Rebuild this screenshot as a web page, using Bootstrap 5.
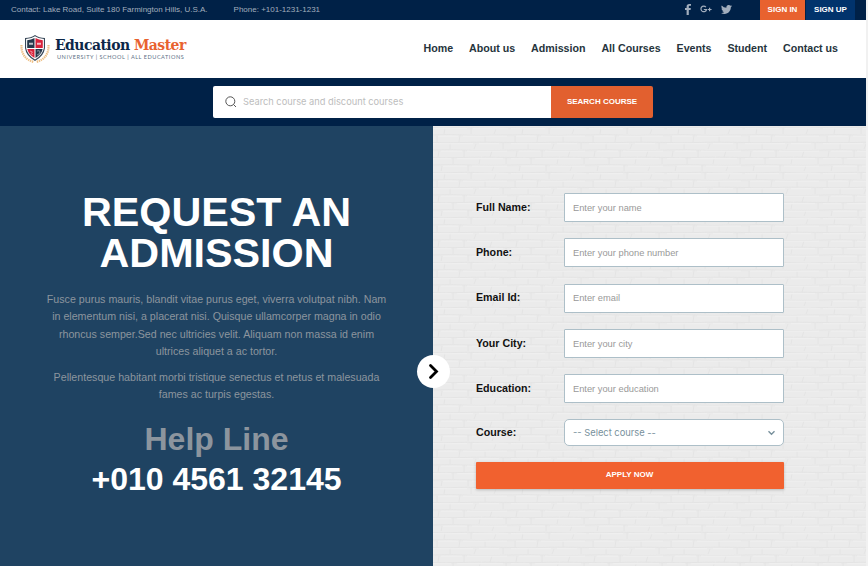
<!DOCTYPE html>
<html lang="en">
<head>
<meta charset="utf-8">
<meta name="viewport" content="width=device-width, initial-scale=1">
<title>Education Master</title>
<link href="https://cdn.jsdelivr.net/npm/bootstrap@5.3.0/dist/css/bootstrap.min.css" rel="stylesheet">
<style>
body{font-family:"Liberation Sans",Arial,sans-serif;background:#f1f1f1;overflow:hidden;height:566px;line-height:1.5}
svg{display:block;flex:none}
.site{width:866px;height:566px}
.topbar{height:20px;background:#002147;color:#a2aebd;font-size:8px;line-height:19px;padding-left:11px;padding-right:11px}
.topbar .tel{margin-left:26px}
.social{gap:9px;margin-right:28px;height:19px}
.sign{font-size:8px;font-weight:700;color:#fff;height:20px;line-height:19px;border-radius:0;padding:0;text-align:center;border:0}
.sign-in{background:#e8622f;width:45px}
.sign-up{background:#01336c;width:49px;margin-left:1px}
.mainnav{height:58px;padding:0 28px 0 20px}
.brandtext{padding-top:3px;margin-left:5px}
.brandname{font-family:"DejaVu Serif Condensed","DejaVu Serif",serif;font-weight:700;font-size:15.5px;line-height:16px;letter-spacing:-.52px;color:#0d2748;white-space:nowrap}
.brandname span{color:#e8622f}
.tagline{font-family:Lato,sans-serif;font-size:5.6px;line-height:7px;letter-spacing:.51px;color:#5d6f86;white-space:nowrap;padding-left:2px}
.menu{gap:15.9px;padding-bottom:2px}
.mainnav .nav-link{font-size:10.67px;font-weight:700;color:#26343c;padding:0;line-height:16px}
.searchbar{height:48px;background:#002147}
.searchbox{width:338px;height:32px;background:#fff;border-radius:2px 0 0 2px;padding-left:12px}
.searchbox input{font-family:Inter,sans-serif;font-size:9.28px;padding:0;margin-left:6px;border:0;background:none;box-shadow:none;line-height:14px}
.searchbox input::placeholder{color:#bdbdbd}
.btn-search{width:102px;height:32px;background:#e2602f;color:#fff;font-size:8px;font-weight:700;border-radius:0 2px 2px 0;border:0;padding:0 0 1px}
.half{width:433px;height:440px}
.request{background:#1f4362;color:#8c959e;padding:66px 40px 0;text-align:center}
.request h2{font-size:41.3px;line-height:41px;font-weight:700;color:#fff;margin:0 0 17px}
.request p{font-size:10.67px;line-height:17.35px;margin:0 0 8.5px}
.request .help{font-size:32px;line-height:40px;font-weight:700;margin-top:15px}
.request .help b{color:#fff;display:block}
.arrow{left:417px;top:229px;width:33px;height:33px;border-radius:50%;background:#fff}
.apply{padding:67px 82px 0 43px}
.bricks{position:absolute;left:0;top:0}
.frow{height:29.3px;margin-bottom:16px}
.frow label{width:88px;font-size:10.67px;font-weight:700;color:#111;line-height:16px;padding-bottom:2px}
.frow .form-control{height:29px;font-size:9.3px;border:1px solid #adbfc8;border-radius:1px;padding:0 8px;width:220px;background:#fff}
.frow .form-control::placeholder{color:#999}
.picker-row{height:27px}
.frow .picker{height:27px;width:220px;font-family:Inter,sans-serif;font-size:9.33px;color:#78909c;border:1px solid #adbfc8;border-radius:5px;background:#fff;padding:0 7px 0 8px}
.btn-apply{width:308px;height:27px;background:#f1612f;color:#fff;font-size:8px;font-weight:700;border:0;border-radius:1px;padding:0 1px 2px 0;box-shadow:0 1px 3px rgba(0,0,0,.22)}
</style>
</head>
<body>
<div class="site">
<header>
<div class="topbar d-flex">
  <span>Contact: Lake Road, Suite 180 Farmington Hills, U.S.A.</span><span class="tel">Phone: +101-1231-1231</span>
  <div class="social d-flex align-items-center ms-auto">
    <svg width="6" height="11" viewBox="0 0 6 11" fill="#a2aebd"><path d="M1.600 11V6H0V4.100h1.600V2.700C1.600 1 2.600 0 4.200 0L6 .1v1.700H4.900C4 1.800 3.800 2.200 3.800 2.800v1.300h2L5.600 6H3.800v5z"/></svg>
    <svg width="12" height="9" viewBox="0 0 12 9" fill="none" stroke="#a2aebd" stroke-width="1.200"><path d="M5.900 2.100A2.800 2.800 0 1 0 6.500 4.500H3.800M9.600 2.700v3.600M7.800 4.500h3.800"/></svg>
    <svg width="11" height="9" viewBox="0 0 16 13" fill="#a2aebd"><path d="M5 13c6 0 9.300-5 9.300-9.300v-.4A6.700 6.700 0 0 0 16 1.500a6.600 6.600 0 0 1-1.900.5A3.300 3.300 0 0 0 15.500.2a6.600 6.600 0 0 1-2 .8 3.300 3.300 0 0 0-5.600 3A9.300 9.300 0 0 1 1.100.6a3.300 3.300 0 0 0 1 4.400 3.200 3.200 0 0 1-1.500-.4 3.300 3.300 0 0 0 2.600 3.200 3.200 3.200 0 0 1-1.500.1 3.300 3.300 0 0 0 3.100 2.300A6.600 6.600 0 0 1 0 11.500 9.300 9.300 0 0 0 5 13"/></svg>
  </div>
  <a class="btn sign sign-in" href="#">SIGN IN</a><a class="btn sign sign-up" href="#">SIGN UP</a>
</div>
<nav class="mainnav bg-white d-flex align-items-center justify-content-between">
  <a class="d-flex text-decoration-none" href="#">
    <svg width="30" height="30" viewBox="0 0 30 30">
      <g fill="none" stroke="#eebf85" stroke-width="2.200" stroke-dasharray="1.400 .7"><path d="M1.500 11C1 19 5 26 14 28M28.500 11C29 19 25 26 16 28"/></g>
      <path d="M5 4Q11 4 15 1Q19 4 25 4V14Q24 22 15 27Q6 22 5 14Z" fill="#3a4959"/>
      <path d="M6.100 5.100Q11 5 15 2.300Q19 5 23.900 5.100V14Q22.700 21 15 25.500Q7.300 21 6.100 14Z" fill="#fff"/>
      <path d="M7.200 6.200Q11 6 14.500 4V14H7.200Z" fill="#26384b"/>
      <path d="M15.500 4Q19 6 22.800 6.200V14H15.500Z" fill="#d9233b"/>
      <path d="M7.300 15H14.500V24Q8.600 20.500 7.300 15Z" fill="#d9233b"/>
      <path d="M15.500 15H22.700Q21.400 20.500 15.500 24Z" fill="#26384b"/>
      <path d="M9 8.700h4v2H9zM17 8.700h4v2h-4z" fill="#fff" opacity=".7"/>
      <path d="M10 17l2.500 1-1.500 1.500 2 1.500M17 17q3-1 3 1t-3 3" fill="none" stroke="#fff" stroke-width=".8" opacity=".6"/>
    </svg>
    <div class="brandtext"><div class="brandname">Education <span>Master</span></div><div class="tagline">UNIVERSITY | SCHOOL | ALL EDUCATIONS</div></div>
  </a>
  <div class="nav flex-nowrap menu">
    <a class="nav-link" href="#">Home</a><a class="nav-link" href="#">About us</a><a class="nav-link" href="#">Admission</a><a class="nav-link" href="#">All Courses</a><a class="nav-link" href="#">Events</a><a class="nav-link" href="#">Student</a><a class="nav-link" href="#">Contact us</a>
  </div>
</nav>
<form class="searchbar d-flex justify-content-center align-items-center">
  <div class="searchbox d-flex align-items-center">
    <svg width="12" height="12" viewBox="0 0 12 12" fill="none" stroke="#444" stroke-width=".9"><circle cx="5.300" cy="5.300" r="4.500"/><path d="M8.500 8.500l2.500 2.500"/></svg>
    <input class="form-control" type="text" placeholder="Search course and discount courses">
  </div>
  <button class="btn btn-search" type="button">SEARCH COURSE</button>
</form>
</header>
<main class="d-flex position-relative">
  <section class="half request">
    <h2>REQUEST AN<br>ADMISSION</h2>
    <p>Fusce purus mauris, blandit vitae purus eget, viverra volutpat nibh. Nam<br>in elementum nisi, a placerat nisi. Quisque ullamcorper magna in odio<br>rhoncus semper.Sed nec ultricies velit. Aliquam non massa id enim<br>ultrices aliquet a ac tortor.</p>
    <p>Pellentesque habitant morbi tristique senectus et netus et malesuada<br>fames ac turpis egestas.</p>
    <div class="help">Help Line<b>+010 4561 32145</b></div>
  </section>
  <section class="half apply position-relative">
    <svg class="bricks" width="433" height="440">
      <defs>
        <pattern id="wall" width="78" height="45" patternUnits="userSpaceOnUse">
          <rect width="78" height="45" fill="#ebebeb"/>
          <g fill="none" stroke="#e3e3e3" stroke-width=".9">
            <path d="M0 1.500q10 .7 22 0t26 .3 30-.3M0 9q15-.7 31 0t25 .2 22-.2M0 16.500q14 .6 30 0t48 0M0 24q20-.6 36 .2t42-.2M0 31.500q12 .6 28 0t50 0M0 39q18-.7 38 0t40 0"/>
            <path d="M12 2l-1 6M38 2v6M63 3l-2 5M4 10v6M27 9l-1 7M52 10v6M17 17v6M43 18l-2 5M70 17v6M6 25l-1 6M31 24v7M59 25l-2 6M20 32v6M47 33l-1 5M73 32v6M9 40l-1 6M35 39v6M61 40l-2 5"/>
          </g>
          <g fill="none" stroke="#f0f0f0" stroke-width=".9"><path d="M0 2.700h34M40 2.700h35M5 10.200h20M30 10.200h44M0 17.700h40M46 17.700h20M8 25.200h21M34 25.200h40M0 32.700h18M24 32.700h46M10 40.200h24M39 40.200h35"/></g>
        </pattern>
      </defs>
      <rect width="433" height="440" fill="url(#wall)"/>
    </svg>
    <form class="position-relative">
      <div class="frow d-flex align-items-center"><label for="f1">Full Name:</label><input id="f1" class="form-control" placeholder="Enter your name"></div>
      <div class="frow d-flex align-items-center"><label for="f2">Phone:</label><input id="f2" class="form-control" placeholder="Enter your phone number"></div>
      <div class="frow d-flex align-items-center"><label for="f3">Email Id:</label><input id="f3" class="form-control" placeholder="Enter email"></div>
      <div class="frow d-flex align-items-center"><label for="f4">Your City:</label><input id="f4" class="form-control" placeholder="Enter your city"></div>
      <div class="frow d-flex align-items-center"><label for="f5">Education:</label><input id="f5" class="form-control" placeholder="Enter your education"></div>
      <div class="frow picker-row d-flex align-items-center"><label>Course:</label>
        <div class="picker d-flex align-items-center justify-content-between" role="button" tabindex="0"><span>-- Select course --</span><svg width="9" height="9" viewBox="0 0 9 9" fill="none" stroke="#78909c" stroke-width="1.400"><path d="M1.500 3.200l3 3 3-3"/></svg></div></div>
      <button class="btn btn-apply" type="button">APPLY NOW</button>
    </form>
  </section>
  <div class="arrow position-absolute d-flex align-items-center justify-content-center">
    <svg width="11" height="17" viewBox="0 0 11 17" fill="none" stroke="#000" stroke-width="2.800" stroke-linecap="round"><path d="M2.500 2.500l6 6-6 6"/></svg>
  </div>
</main>
</div>
<script src="https://cdn.jsdelivr.net/npm/bootstrap@5.3.0/dist/js/bootstrap.bundle.min.js"></script>
</body>
</html>
